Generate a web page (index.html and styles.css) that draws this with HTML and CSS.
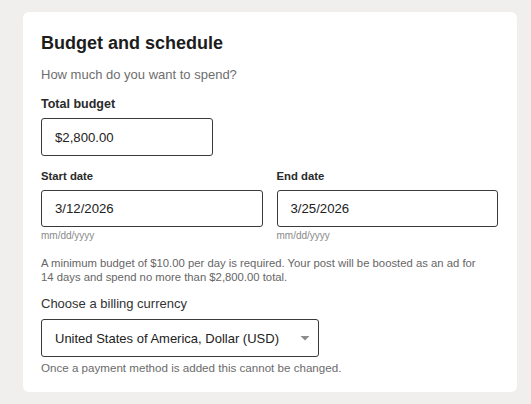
FILE: index.html
```html
<!DOCTYPE html>
<html lang="en">
<head>
<meta charset="utf-8">
<title>Budget and schedule</title>
<link rel="stylesheet" href="styles.css">
</head>
<body>
<main class="card">
  <h2 class="title">Budget and schedule</h2>
  <p class="subtitle">How much do you want to spend?</p>
  <div class="label-strong">Total budget</div>
  <div class="field field-budget">$2,800.00</div>

  <div class="dates">
    <div class="date-col">
      <div class="label-small">Start date</div>
      <div class="field field-date">3/12/2026</div>
      <div class="hint">mm/dd/yyyy</div>
    </div>
    <div class="date-col">
      <div class="label-small">End date</div>
      <div class="field field-date">3/25/2026</div>
      <div class="hint">mm/dd/yyyy</div>
    </div>
  </div>

  <p class="note">A minimum budget of $10.00 per day is required. Your post will be boosted as an ad for 14 days and spend no more than $2,800.00 total.</p>

  <div class="label-regular">Choose a billing currency</div>
  <div class="field field-select">
    <span>United States of America, Dollar (USD)</span>
    <svg class="caret" width="10" height="5" viewBox="0 0 10 5"><path d="M0.5 0H9.5L5 4.5Z" fill="#8c8c8c"/></svg>
  </div>
  <p class="helper">Once a payment method is added this cannot be changed.</p>
</main>
</body>
</html>
```
FILE: styles.css
```css
* { box-sizing: border-box; }
html, body { margin: 0; padding: 0; }
body {
  background: #f0efed;
  font-family: "Liberation Sans", Arial, sans-serif;
  color: #1f1f1f;
  width: 531px;
  height: 404px;
  overflow: hidden;
  padding: 12px 14px 0 23px;
}
.card {
  background: #fff;
  border-radius: 6px;
  width: 494px;
  height: 380px;
  padding: 20px 19px 0 18px;
}
.title {
  margin: 0;
  font-size: 18px;
  line-height: 22px;
  font-weight: 700;
  color: #1c1c1c;
}
.subtitle {
  margin: 12px 0 0;
  font-size: 13px;
  line-height: 18px;
  color: #6e6e6e;
}
.label-strong {
  margin-top: 12px;
  font-size: 12.5px;
  line-height: 16px;
  font-weight: 700;
  color: #2a2a2a;
}
.field {
  border: 1px solid #3a3a3a;
  border-radius: 3px;
  background: #fff;
  display: flex;
  align-items: center;
  padding-left: 13px;
  font-size: 13.2px;
  color: #222;
}
.field-budget {
  margin-top: 6px;
  width: 172px;
  height: 38px;
}
.dates {
  margin-top: 13px;
  display: grid;
  grid-template-columns: 1fr 1fr;
  column-gap: 14px;
}
.label-small {
  font-size: 11.3px;
  line-height: 14px;
  font-weight: 700;
  color: #2a2a2a;
}
.field-date {
  margin-top: 7px;
  height: 37px;
}
.hint {
  margin-top: 3px;
  font-size: 10px;
  line-height: 12px;
  color: #8a8a8a;
}
.note {
  margin: 14px 0 0;
  max-width: 446px;
  font-size: 11.3px;
  line-height: 14px;
  color: #666;
}
.label-regular {
  margin-top: 12px;
  font-size: 13px;
  line-height: 16px;
  color: #333;
}
.field-select {
  margin-top: 7px;
  width: 278px;
  height: 38px;
  justify-content: space-between;
  padding-right: 8px;
  font-size: 13px;
}
.caret { display: block; }
.helper {
  margin: 4px 0 0;
  font-size: 11.6px;
  line-height: 14px;
  color: #6b6b6b;
}
```
